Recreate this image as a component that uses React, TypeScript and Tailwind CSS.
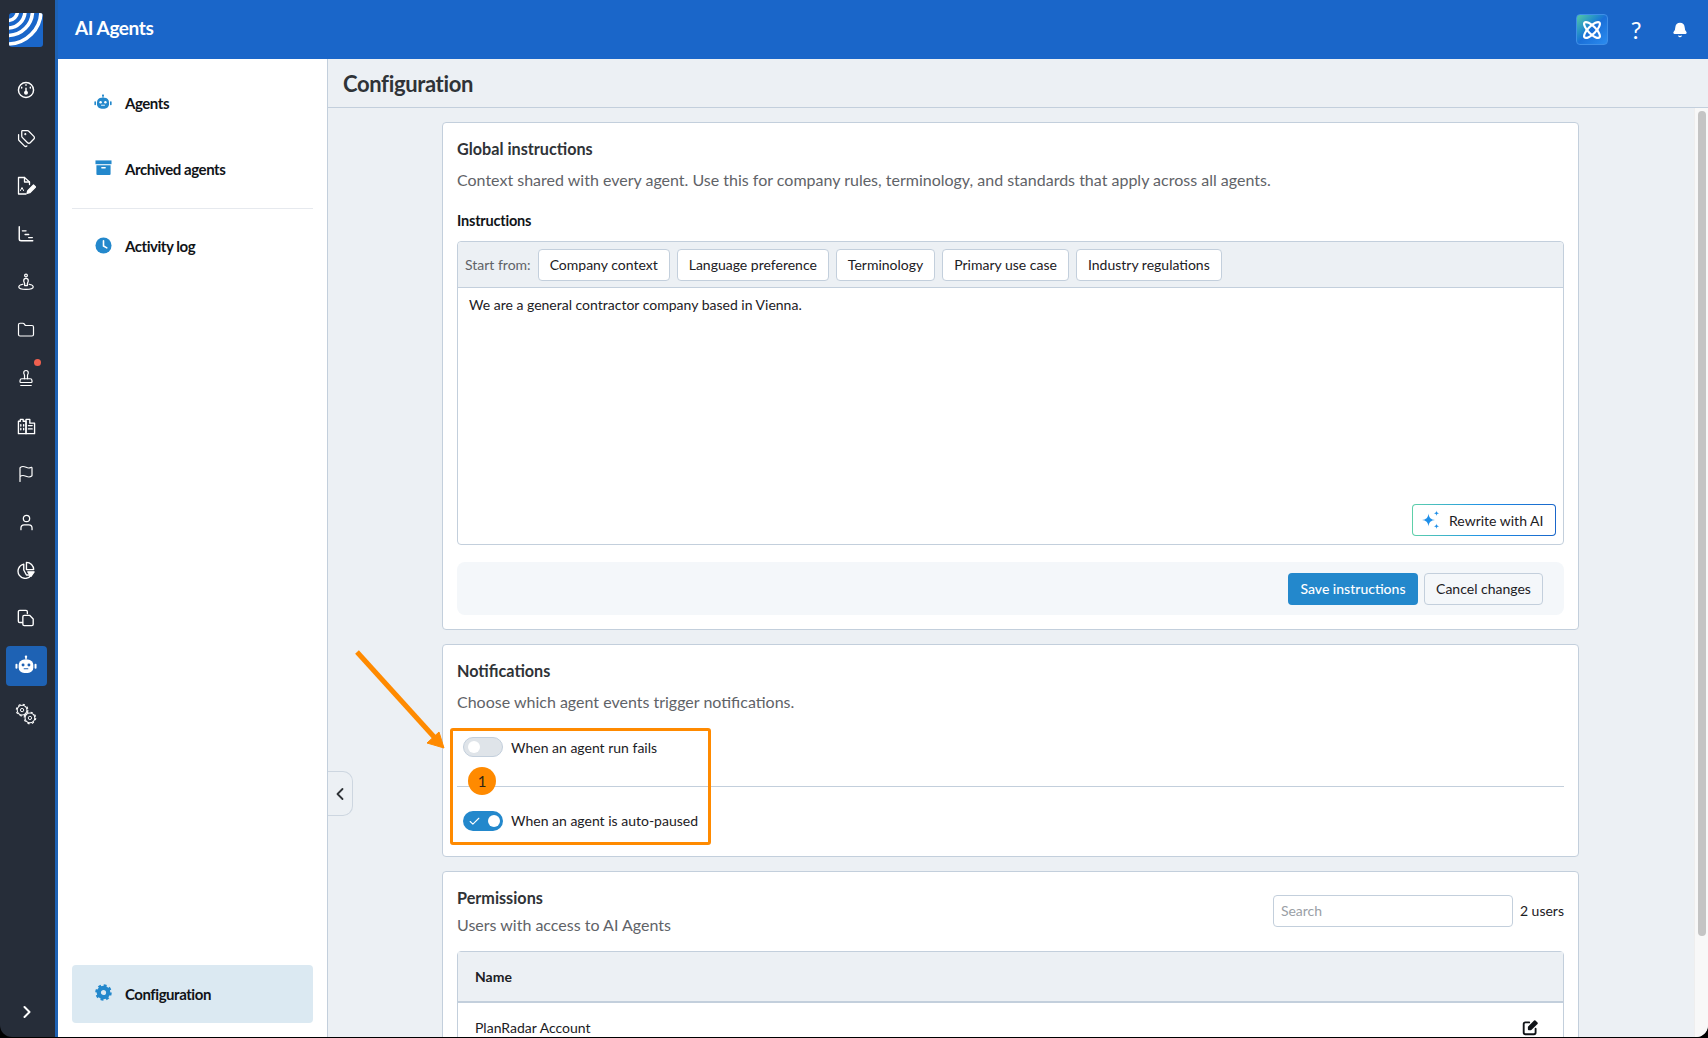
import React from "react";
import { Tags, Folder, Stamp, Flag, User, ChevronLeft, ChevronRight, Check, Bell } from "lucide-react";

const font = { fontFamily: "Lato, 'Open Sans', sans-serif" };

function Bot({ className = "" }: { className?: string }) {
  return (
    <svg viewBox="0 0 24 24" className={className} fill="currentColor">
      <rect x="11.200" y="1" width="1.600" height="4" />
      <circle cx="12" cy="1.800" r="1.300" />
      <rect x="4" y="5" width="16" height="14.500" rx="6" />
      <rect x="0.500" y="9.500" width="2.200" height="5.500" rx="1" />
      <rect x="21.300" y="9.500" width="2.200" height="5.500" rx="1" />
      <circle cx="8.800" cy="11" r="1.600" fill="var(--eye)" />
      <circle cx="15.200" cy="11" r="1.600" fill="var(--eye)" />
      <path d="M10 15h4" stroke="var(--eye)" strokeWidth="1.200" strokeLinecap="round" />
    </svg>
  );
}

const stroke = { fill: "none", stroke: "currentColor", strokeWidth: 1.6, strokeLinecap: "round" as const, strokeLinejoin: "round" as const };

function Gauge() {
  return (
    <svg viewBox="0 0 20 20" className="w-[18px] h-[18px]" {...stroke}>
      <circle cx="10" cy="10" r="8.400" />
      <path d="M10 4.200v.6M5.200 7v.8M14.800 7v.8M10 8v4" />
      <circle cx="10" cy="13" r="1.400" fill="currentColor" />
    </svg>
  );
}
function FileSign() {
  return (
    <svg viewBox="0 0 20 20" className="w-[20px] h-[20px]" {...stroke} strokeWidth={1.300}>
      <path d="M10 18H2.500V1.500h6l5 4.500v2.500" />
      <path d="M8.500 1.500V6h5" />
      <path d="M4.500 14.500l1.500-3 1.500 3" strokeWidth={1} />
      <path d="M11 17.500l.8-2.800 5.700-5.700 2 2-5.700 5.700z" fill="currentColor" />
    </svg>
  );
}
function Gantt() {
  return (
    <svg viewBox="0 0 20 20" className="w-[18px] h-[18px]" {...stroke}>
      <path d="M2.500 2v13.500a2 2 0 0 0 2 2h13" />
      <path d="M6 6.500h4M9 10.500h4M13 14h4" />
    </svg>
  );
}
function SitePin() {
  return (
    <svg viewBox="0 0 20 20" className="w-[18px] h-[18px]" {...stroke} strokeWidth={1.400}>
      <circle cx="10" cy="2.800" r="1.500" />
      <path d="M7.500 8.500a2.500 2.500 0 0 1 5 0c0 1.500-1 2.300-1 3.500v2h-3v-2c0-1.200-1-2-1-3.500z" />
      <path d="M6.500 12.500C4 13 2 14 2 15.500c0 1.600 3.500 2.700 8 2.700s8-1.100 8-2.700c0-1.500-2-2.500-4.500-3" />
    </svg>
  );
}
function Buildings() {
  return (
    <svg viewBox="0 0 20 20" className="w-[19px] h-[19px]" {...stroke} strokeWidth={1.400}>
      <path d="M1.500 17.500V4.500h2V2.500h3v2h3v13z" />
      <path d="M9.500 17.500V2.500h4v4h5v11z" />
      <path d="M4 8v1.500M7 8v1.500M4 12v1.500M7 12v1.500M12 9h4M12 12.500h4" />
    </svg>
  );
}
function Pie() {
  return (
    <svg viewBox="0 0 20 20" className="w-[18px] h-[18px]" {...stroke} strokeWidth={1.500}>
      <path d="M7.500 3.500A8 8 0 1 0 16 15.500H10.500L7.500 10z" />
      <path d="M10.500 1.500a8 8 0 0 1 8 8h-8z" />
      <path d="M12 12h7l-3.500 5z" fill="currentColor" />
    </svg>
  );
}
function Files() {
  return (
    <svg viewBox="0 0 20 20" className="w-[18px] h-[18px]" {...stroke} strokeWidth={1.500}>
      <path d="M6 15H3a1.500 1.500 0 0 1-1.500-1.500V3A1.500 1.500 0 0 1 3 1.500h7A1.500 1.500 0 0 1 11.500 3v2" />
      <path d="M8 7h6l4 4v6a1.500 1.500 0 0 1-1.500 1.500H8A1.500 1.500 0 0 1 6.500 17V8.500A1.500 1.500 0 0 1 8 7z" />
    </svg>
  );
}
function GearOutline({ cx, cy }: { cx: number; cy: number }) {
  return (
    <g>
      <circle cx={cx} cy={cy} r={6.200} fill="none" stroke="currentColor" strokeWidth={1.300} />
      <circle cx={cx} cy={cy} r={7.400} fill="none" stroke="currentColor" strokeWidth={1.300} strokeDasharray="2.900 2.910" />
      <circle cx={cx} cy={cy} r={2.100} fill="none" stroke="currentColor" strokeWidth={1.200} />
    </g>
  );
}
function Gears() {
  return (
    <svg viewBox="0 0 28 28" className="w-[22px] h-[22px]">
      <GearOutline cx={9} cy={9} />
      <GearOutline cx={19} cy={19} />
    </svg>
  );
}

function Rail({ children, active, dot }: { children: React.ReactNode; active?: boolean; dot?: boolean }) {
  return (
    <div className={`relative w-[41px] h-[40px] my-1 flex items-center justify-center rounded text-white ${active ? "bg-[#1e62b4]" : ""}`}>
      {children}
      {dot && <span className="absolute right-[6px] top-[1px] w-[7px] h-[7px] rounded-full bg-[#f0604f]" />}
    </div>
  );
}

function NavItem({ icon, label, className = "" }: { icon: React.ReactNode; label: string; className?: string }) {
  return (
    <div className={`flex items-center h-[24px] pl-[22px] ${className}`}>
      <div className="w-[18px] flex justify-center text-[#2388cc] [--eye:#ffffff]">{icon}</div>
      <span className="ml-[13px] text-[15px] font-bold tracking-[-0.45px] text-[#111418]">{label}</span>
    </div>
  );
}

function Chip({ children }: { children: React.ReactNode }) {
  return (
    <div className="h-[32px] px-[11px] flex items-center rounded border border-[#c3cfdc] bg-white text-[14px] text-[#1c2024]">{children}</div>
  );
}

function Toggle({ on }: { on?: boolean }) {
  return on ? (
    <div className="w-[40px] h-[20px] rounded-full bg-[#2388cc] flex items-center justify-between pl-[5px] pr-[3px]">
      <Check className="w-[13px] h-[13px] text-white" strokeWidth={2} />
      <span className="w-[12px] h-[12px] rounded-full bg-white" />
    </div>
  ) : (
    <div className="w-[40px] h-[20px] rounded-full bg-[#dfe4e9] border border-[#c3cfdc] flex items-center pl-[4px]">
      <span className="w-[12px] h-[12px] rounded-full bg-white" />
    </div>
  );
}

export default function App() {
  return (
    <div className="w-[1708px] h-[1038px] bg-black overflow-hidden" style={font}>
      <div className="relative h-[1037px] flex overflow-hidden rounded-b-[12px]">
        <aside className="w-[58px] shrink-0 bg-[#262d39] border-r-[3px] border-[#1e62b4] flex flex-col items-center relative">
          <div className="mt-[13px] w-[34px] h-[34px] rounded-[3px] bg-[#1a66c9] overflow-hidden mr-[3px]">
            <svg viewBox="0 0 34 34" className="w-full h-full" fill="none" stroke="#fff" strokeWidth="3.600">
              <circle cx="-1" cy="-2" r="9.500" />
              <circle cx="-1" cy="-2" r="17" />
              <circle cx="-1" cy="-2" r="24.500" />
              <circle cx="-1" cy="-2" r="33" />
            </svg>
          </div>
          <div className="mt-[19px] flex flex-col items-center mr-[3px]">
            <Rail><Gauge /></Rail>
            <Rail><Tags className="w-[19px] h-[19px]" strokeWidth={1.600} /></Rail>
            <Rail><FileSign /></Rail>
            <Rail><Gantt /></Rail>
            <Rail><SitePin /></Rail>
            <Rail><Folder className="w-[18px] h-[18px]" strokeWidth={1.600} /></Rail>
            <Rail dot><Stamp className="w-[18px] h-[18px]" strokeWidth={1.600} /></Rail>
            <Rail><Buildings /></Rail>
            <Rail><Flag className="w-[18px] h-[18px]" strokeWidth={1.600} /></Rail>
            <Rail><User className="w-[19px] h-[19px]" strokeWidth={1.600} /></Rail>
            <Rail><Pie /></Rail>
            <Rail><Files /></Rail>
            <Rail active><div className="[--eye:#1e62b4]"><Bot className="w-[22px] h-[22px]" /></div></Rail>
            <Rail><Gears /></Rail>
          </div>
          <ChevronRight className="absolute bottom-[15px] left-[17px] w-[20px] h-[20px] text-white" strokeWidth={2.400} />
        </aside>

        <div className="flex-1 flex flex-col min-w-0">
          <header className="h-[59px] shrink-0 bg-[#1a66c9] flex items-center pl-[17px] text-white">
            <span className="text-[19px] font-bold tracking-[-0.4px] mb-[2px]">AI Agents</span>
            <div className="ml-auto flex items-center">
              <div className="w-[32px] h-[31px] rounded-[4px] border border-[#3f8fe8] bg-gradient-to-br from-[#57c8a0] via-[#1a6fd8] to-[#2b8cf0] flex items-center justify-center">
                <svg viewBox="0 0 24 24" className="w-[24px] h-[24px]" fill="none" stroke="#fff" strokeWidth="2.200">
                  <ellipse cx="12" cy="12" rx="10.500" ry="3.800" transform="rotate(45 12 12)" />
                  <ellipse cx="12" cy="12" rx="10.500" ry="3.800" transform="rotate(-45 12 12)" />
                </svg>
              </div>
              <span className="ml-[20px] w-[16px] text-center text-[24px] leading-none font-normal">?</span>
              <Bell className="ml-[28px] mr-[20px] w-[16px] h-[16px]" fill="#fff" strokeWidth={2} />
            </div>
          </header>

          <div className="flex-1 flex min-h-0">
            <nav className="w-[270px] shrink-0 bg-white border-r border-[#c3cfdc] flex flex-col pt-[32px] px-[14px] pb-[14px]">
              <NavItem icon={<Bot className="w-[22px] h-[22px]" />} label="Agents" />
              <NavItem className="mt-[42px]" icon={
                <svg viewBox="0 0 18 18" className="w-[17px] h-[17px] mb-[3px]" fill="#2388cc">
                  <rect x="0.500" y="1.500" width="17" height="4" />
                  <path d="M1.500 6.500h15V16a1 1 0 0 1-1 1h-13a1 1 0 0 1-1-1z" />
                  <rect x="6.500" y="8.500" width="5" height="1.500" rx="0.700" fill="#fff" />
                </svg>
              } label="Archived agents" />
              <div className="mt-[27px] border-t border-[#e6e9ee]" />
              <NavItem className="mt-[25px]" icon={
                <svg viewBox="0 0 18 18" className="w-[17px] h-[17px] mb-[2px]">
                  <circle cx="9" cy="9" r="8.500" fill="#2388cc" />
                  <path d="M9 4v5.500l3.500 2" fill="none" stroke="#fff" strokeWidth="1.700" strokeLinecap="round" />
                </svg>
              } label="Activity log" />
              <div className="mt-auto h-[58px] rounded bg-[#dbe9f2] flex items-center">
                <NavItem icon={
                  <svg viewBox="0 0 18 18" className="w-[17px] h-[17px] mb-[3px]" fill="none" stroke="#2388cc">
                    <circle cx="9" cy="9" r="5" strokeWidth="4.500" />
                    <circle cx="9" cy="9" r="7.500" strokeWidth="2.500" strokeDasharray="3 2.890" />
                  </svg>
                } label="Configuration" />
              </div>
            </nav>

            <main className="flex-1 min-w-0 flex flex-col bg-[#ecf0f4]">
              <div className="h-[49px] shrink-0 border-b border-[#c3cfdc] flex items-center pl-[15px]">
                <h1 className="text-[22px] font-bold tracking-[-0.35px] text-[#2f3337]">Configuration</h1>
              </div>
              <div className="flex-1 flex min-h-0">
                <div className="flex-1 min-w-0 pt-[14px] pr-[1px] overflow-hidden">
                  <section className="mx-auto w-[1137px] h-[508px] bg-white border border-[#c3cfdc] rounded px-[14px]">
                    <h2 className="mt-[14px] text-[16.200px] leading-[24px] font-bold text-[#2f3337]">Global instructions</h2>
                    <p className="mt-[7px] text-[16px] leading-[24px] text-[#5f6368]">Context shared with every agent. Use this for company rules, terminology, and standards that apply across all agents.</p>
                    <div className="mt-[19px] text-[14.500px] leading-[20px] font-bold tracking-[-0.2px] text-[#111418]">Instructions</div>
                    <div className="mt-[10px] h-[304px] border border-[#c3cfdc] rounded flex flex-col relative">
                      <div className="h-[46px] shrink-0 bg-[#ecf0f4] border-b border-[#c3cfdc] rounded-t flex items-center gap-[7px] pl-[7px]">
                        <span className="text-[14px] text-[#5f6368]">Start from:</span>
                        <Chip>Company context</Chip>
                        <Chip>Language preference</Chip>
                        <Chip>Terminology</Chip>
                        <Chip>Primary use case</Chip>
                        <Chip>Industry regulations</Chip>
                      </div>
                      <div className="pl-[11px] pt-[7px] text-[14px] leading-[20px] text-[#1c2024]">We are a general contractor company based in Vienna.</div>
                      <div className="absolute right-[7px] bottom-[8px] w-[144px] h-[32px] rounded-[4px] p-[1px] bg-gradient-to-r from-[#5fd0a8] via-[#1f8fe8] to-[#1a66c9]">
                        <div className="w-full h-full rounded-[3px] bg-white flex items-center pl-[8px] text-[14px] text-[#1c2024]">
                          <svg viewBox="0 0 20 20" className="w-[20px] h-[20px] mr-[8px]" fill="#1f8fe8">
                            <path d="M7.500 3.500C8 7.800 9.700 9.500 14 10c-4.300.5-6 2.200-6.500 6.500C7 12.200 5.300 10.500 1 10c4.300-.5 6-2.200 6.500-6.500z" />
                            <path d="M15.500 0.500c.2 1.900.9 2.600 2.800 2.800-1.900.2-2.600.9-2.800 2.800-.2-1.900-.9-2.600-2.800-2.800 1.900-.2 2.600-.9 2.800-2.800z" />
                            <path d="M15.500 13.500c.2 1.900.9 2.600 2.800 2.800-1.900.2-2.600.9-2.800 2.800-.2-1.900-.9-2.600-2.800-2.800 1.900-.2 2.600-.9 2.800-2.800z" />
                          </svg>
                          Rewrite with AI
                        </div>
                      </div>
                    </div>
                    <div className="mt-[17px] h-[53px] rounded-lg bg-[#f4f7fa] flex items-center justify-end gap-[6px] pr-[21px]">
                      <div className="w-[130px] h-[32px] rounded bg-[#2388cc] text-white text-[14px] font-medium flex items-center justify-center">Save instructions</div>
                      <div className="w-[119px] h-[32px] rounded border border-[#c3cfdc] text-[14px] text-[#1c2024] flex items-center justify-center">Cancel changes</div>
                    </div>
                  </section>

                  <section className="mx-auto mt-[14px] w-[1137px] h-[213px] bg-white border border-[#c3cfdc] rounded px-[14px]">
                    <h2 className="mt-[14px] text-[16.200px] leading-[24px] font-bold text-[#2f3337]">Notifications</h2>
                    <p className="mt-[7px] text-[16px] leading-[24px] text-[#5f6368]">Choose which agent events trigger notifications.</p>
                    <div className="mt-[23px] flex items-center pl-[6px] h-[20px]">
                      <Toggle />
                      <span className="ml-[8px] text-[14px] text-[#1c2024]">When an agent run fails</span>
                    </div>
                    <div className="mt-[29px] border-t border-[#c3cfdc]" />
                    <div className="mt-[24px] flex items-center pl-[6px] h-[20px]">
                      <Toggle on />
                      <span className="ml-[8px] mb-[1px] text-[14px] text-[#1c2024]">When an agent is auto-paused</span>
                    </div>
                  </section>

                  <section className="mx-auto mt-[14px] w-[1137px] h-[300px] bg-white border border-[#c3cfdc] rounded px-[14px]">
                    <div className="flex items-start">
                      <div>
                        <h2 className="mt-[14px] text-[16.200px] leading-[24px] font-bold text-[#2f3337]">Permissions</h2>
                        <p className="mt-[3px] text-[16px] leading-[24px] text-[#5f6368]">Users with access to AI Agents</p>
                      </div>
                      <div className="ml-auto mt-[23px] flex items-center">
                        <div className="w-[240px] h-[32px] rounded border border-[#c3cfdc] pl-[7px] pb-[2px] flex items-center text-[14px] text-[#9aa0a6]">Search</div>
                        <span className="ml-[7px] mb-[2px] text-[14px] text-[#1c2024]">2 users</span>
                      </div>
                    </div>
                    <div className="mt-[14px] border border-[#c3cfdc] rounded-t">
                      <div className="h-[51px] bg-[#ecf0f4] border-b-2 border-[#c3cfdc] flex items-center pl-[17px] text-[14px] font-bold text-[#1c2024]">Name</div>
                      <div className="h-[50px] flex items-center justify-between pl-[17px] pr-[24px] text-[14px] text-[#1c2024]">
                        <span className="mb-[2px]">PlanRadar Account</span>
                        <svg viewBox="0 0 20 20" className="w-[17px] h-[17px] mb-[2px]" fill="none" stroke="#111418" strokeWidth="2.200" strokeLinecap="round" strokeLinejoin="round">
                          <path d="M8.500 4H4a2 2 0 0 0-2 2v10a2 2 0 0 0 2 2h10a2 2 0 0 0 2-2v-4.500" />
                          <path d="M8 9.500l7-7 2.500 2.500-7 7H8z" fill="#111418" />
                        </svg>
                      </div>
                    </div>
                  </section>
                </div>
                <div className="w-[14px] shrink-0 bg-[#f8f8f8] pt-[3px] pl-[3px] border-l border-[#eeeeee]">
                  <div className="w-[8px] h-[825px] rounded-full bg-[#c4c4c4]" />
                </div>
              </div>
            </main>
          </div>
        </div>

        {/* collapse tab */}
        <div className="absolute left-[328px] top-[771px] w-[25px] h-[45px] rounded-r-[10px] border border-l-0 border-[#cdd6e0] bg-[#ecf0f4] flex items-center justify-center">
          <ChevronLeft className="w-[20px] h-[20px] text-[#2f3337]" strokeWidth={2.200} />
        </div>

        {/* annotation overlay */}
        <div className="absolute left-[450px] top-[728px] w-[261px] h-[117px] border-[3px] border-[#ff8a00] rounded-[3px]" />
        <div className="absolute left-[468px] top-[767px] w-[28px] h-[28px] rounded-full bg-[#ff8a00] flex items-center justify-center text-[15px] text-[#2f2414]">1</div>
        <svg className="absolute left-[350px] top-[645px] w-[105px] h-[110px]" viewBox="0 0 105 110">
          <path d="M7 7L85 93" stroke="#ff8a00" strokeWidth="5" fill="none" />
          <path d="M94 103L77 98L89 87Z" fill="#ff8a00" stroke="#ff8a00" strokeWidth="1" />
        </svg>
      </div>
    </div>
  );
}
